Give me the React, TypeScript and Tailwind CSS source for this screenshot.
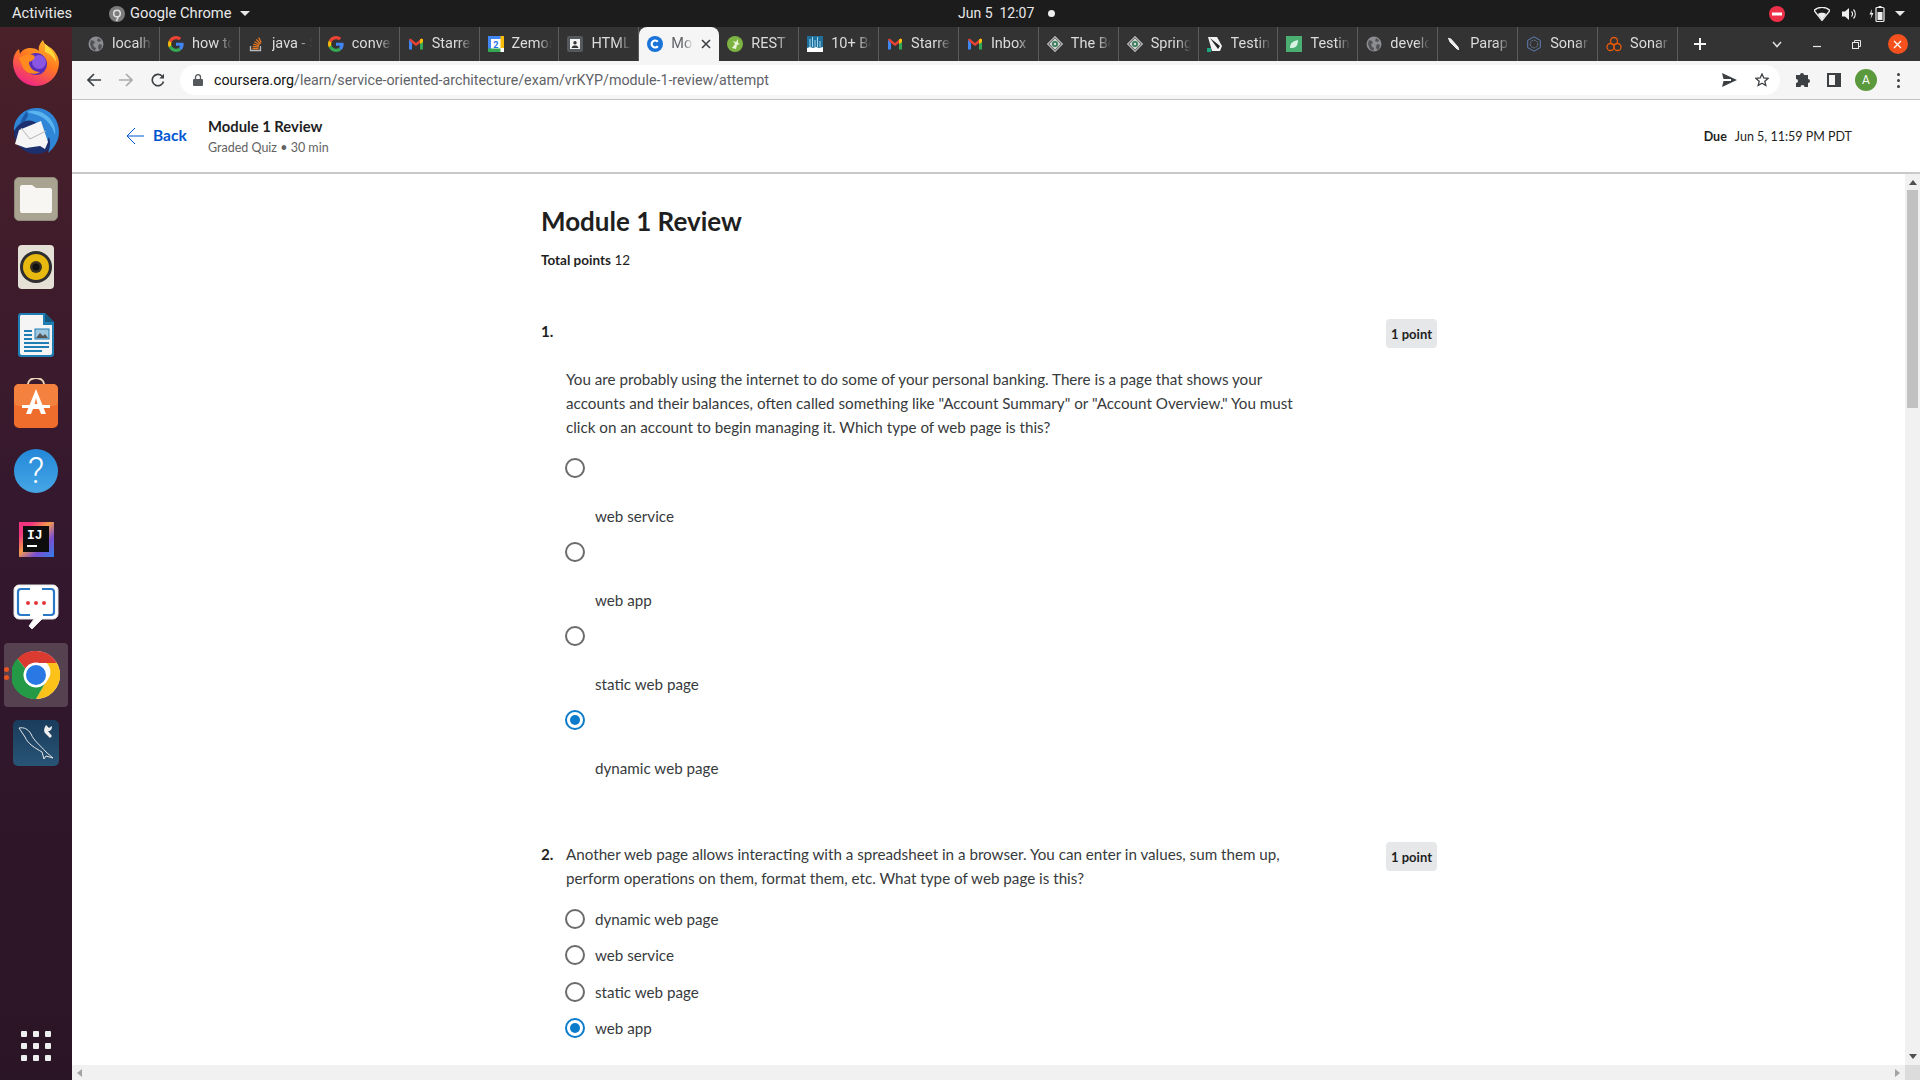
import React from 'react';

const UI = "font-['Roboto',sans-serif]";

type FavKind =
  | 'globe' | 'google' | 'so' | 'gmail' | 'cal' | 'html' | 'coursera' | 'rest'
  | 'bars' | 'gear' | 'pen' | 'leaf' | 'quill' | 'sonarhex' | 'sonarcloud';

const tabs: { label: string; icon: FavKind; active?: boolean }[] = [
  { label: 'localhost', icon: 'globe' },
  { label: 'how to', icon: 'google' },
  { label: 'java - St', icon: 'so' },
  { label: 'convert', icon: 'google' },
  { label: 'Starred', icon: 'gmail' },
  { label: 'Zemoso', icon: 'cal' },
  { label: 'HTML', icon: 'html' },
  { label: 'Mo', icon: 'coursera', active: true },
  { label: 'REST I', icon: 'rest' },
  { label: '10+ Be', icon: 'bars' },
  { label: 'Starred', icon: 'gmail' },
  { label: 'Inbox', icon: 'gmail' },
  { label: 'The Be', icon: 'gear' },
  { label: 'Spring', icon: 'gear' },
  { label: 'Testing', icon: 'pen' },
  { label: 'Testing', icon: 'leaf' },
  { label: 'develop', icon: 'globe' },
  { label: 'Parap', icon: 'quill' },
  { label: 'Sonar', icon: 'sonarhex' },
  { label: 'Sonar', icon: 'sonarcloud' },
];

const Favicon = ({ kind }: { kind: FavKind }) => {
  switch (kind) {
    case 'globe':
      return (
        <svg width="16" height="16" viewBox="0 0 16 16">
          <circle cx="8" cy="8" r="7.5" fill="#8b8d90" />
          <path d="M3 4l3 1 1 2-2 1 1 3 2 1-1 3-3-2-2-5zM10 2l3 2-1 2-3-1zM11 8l3 1-1 4-2 1-1-3z" fill="#4f5155" />
        </svg>
      );
    case 'google':
      return (
        <svg width="16" height="16" viewBox="0 0 48 48">
          <path fill="#EA4335" d="M24 9.5c3.5 0 6.700 1.300 9.100 3.500l6.800-6.800C35.800 2.400 30.300 0 24 0 14.600 0 6.500 5.400 2.600 13.200l7.900 6.100C12.400 13.700 17.700 9.500 24 9.500z" />
          <path fill="#4285F4" d="M46.900 24.500c0-1.600-.1-3.100-.4-4.500H24v9h12.900c-.6 3-2.200 5.500-4.700 7.200l7.600 5.900c4.500-4.100 7.100-10.200 7.100-17.600z" />
          <path fill="#FBBC05" d="M10.500 28.700c-.5-1.500-.8-3-.8-4.700s.3-3.200.8-4.700l-7.900-6.100C.9 16.500 0 20.100 0 24s.9 7.500 2.600 10.800z" />
          <path fill="#34A853" d="M24 48c6.500 0 11.900-2.100 15.800-5.900l-7.600-5.900c-2.100 1.400-4.900 2.300-8.200 2.300-6.300 0-11.600-4.200-13.500-9.900l-7.900 6.100C6.500 42.600 14.600 48 24 48z" />
        </svg>
      );
    case 'so':
      return (
        <svg width="16" height="16" viewBox="0 0 16 16" fill="none" stroke="#e87922" strokeWidth="1.300">
          <path d="M2.500 10v4.500h10V10" stroke="#bcbbbb" />
          <path d="M4.500 12.700h6M4.700 10.500l6 .6M5.300 8.200l5.800 1.600M6.500 5.800l5.200 3M8.300 3.500l4.300 4.300M10.700 1.500l2.500 5" />
        </svg>
      );
    case 'gmail':
      return (
        <svg width="16" height="16" viewBox="0 0 16 16">
          <path d="M1 3.500v10h3V7z" fill="#4285F4" />
          <path d="M12 7v6.500h3v-10z" fill="#34A853" />
          <path d="M1 3.500l1.500-1L8 7l5.500-4.500 1.500 1-3 3.500-4 3-4-3-3-3.500z" fill="#EA4335" />
          <path d="M12 3.500l1.500-1 1.500 1V6l-3 2z" fill="#FBBC05" />
        </svg>
      );
    case 'cal':
      return (
        <svg width="16" height="16" viewBox="0 0 16 16">
          <rect width="16" height="16" fill="#fff" />
          <rect width="16" height="3" fill="#4285F4" />
          <rect width="3" height="16" fill="#4285F4" />
          <rect x="12.500" width="3.500" height="12" fill="#FBBC05" />
          <rect y="12.500" width="12.500" height="3.500" fill="#34A853" />
          <text x="7.800" y="11.500" fontSize="9" fontWeight="700" fill="#1a73e8" textAnchor="middle" fontFamily="Roboto">2</text>
        </svg>
      );
    case 'html':
      return (
        <svg width="16" height="16" viewBox="0 0 16 16">
          <rect width="16" height="16" rx="2" fill="#55585c" />
          <rect x="3" y="3" width="10" height="10" fill="#f4f4f4" />
          <circle cx="8" cy="6.800" r="1.700" fill="#333" />
          <path d="M4.500 12c.5-2 2-2.500 3.500-2.500s3 .5 3.500 2.500z" fill="#333" />
        </svg>
      );
    case 'coursera':
      return (
        <svg width="16" height="16" viewBox="0 0 16 16">
          <circle cx="8" cy="8" r="8" fill="#1a73d9" />
          <path d="M10.800 5.700A3.500 3.500 0 1 0 10.800 10.300" stroke="#fff" strokeWidth="2.200" fill="none" />
        </svg>
      );
    case 'rest':
      return (
        <svg width="16" height="16" viewBox="0 0 16 16">
          <circle cx="8" cy="8" r="8" fill="#7cb342" />
          <path d="M5 12l3-4-2-3 3 1 2-3v4l2 1-3 1-1 4z" fill="#e8f5d8" />
        </svg>
      );
    case 'bars':
      return (
        <svg width="16" height="16" viewBox="0 0 16 16">
          <rect width="16" height="16" fill="#1f6f9c" />
          <path d="M0 16V12l3-1 3 1 3-1 3 1 4-1v5z" fill="#fff" />
          <path d="M3 11V3M5.500 11V1M8 11V4M10.500 11V1M13 11V5" stroke="#9fd8ef" strokeWidth="1" />
        </svg>
      );
    case 'gear':
      return (
        <svg width="16" height="16" viewBox="0 0 16 16">
          <path d="M8 0l8 8-8 8-8-8z" fill="#f1f1f1" />
          <path d="M8 1.800L14.200 8 8 14.200 1.800 8z" fill="none" stroke="#6a6a6a" strokeWidth="1.200" />
          <circle cx="8" cy="8" r="3.600" fill="#3f7a5c" stroke="#d8e6dd" strokeWidth=".7" />
          <circle cx="8" cy="8" r="1.200" fill="#cfe3d6" />
        </svg>
      );
    case 'pen':
      return (
        <svg width="16" height="16" viewBox="0 0 16 16">
          <path d="M1 1h9l5 9-2 5H5z" fill="#f2f2f2" />
          <path d="M3 2l10 8-2 3z" fill="#222" />
          <rect y="12" width="4" height="4" fill="#1ba784" />
        </svg>
      );
    case 'leaf':
      return (
        <svg width="16" height="16" viewBox="0 0 16 16">
          <rect width="16" height="16" fill="#4caf72" />
          <path d="M4 12c0-5 3-7 8-8 0 5-2 8-6 8-.7 0-1.500 0-2 0z" fill="#d9f2e1" />
        </svg>
      );
    case 'quill':
      return (
        <svg width="16" height="16" viewBox="0 0 16 16">
          <path d="M1 1l4 1 8 9 1 4-3-1-8-8z" fill="#ededed" stroke="#1b1b1b" strokeWidth=".8" />
        </svg>
      );
    case 'sonarhex':
      return (
        <svg width="16" height="16" viewBox="0 0 16 16" fill="none" stroke="#5d7fb5" strokeWidth="1">
          <path d="M8 .8l6.300 3.600v7.200L8 15.200l-6.300-3.600V4.400z" />
          <circle cx="8" cy="8" r="3.800" stroke="#7b8fae" strokeDasharray="1.500 1" />
        </svg>
      );
    default:
      return (
        <svg width="16" height="16" viewBox="0 0 16 16" fill="none" stroke="#e8590c" strokeWidth="1.300">
          <circle cx="8" cy="5" r="3.500" />
          <circle cx="4.500" cy="11" r="3.500" />
          <circle cx="11.500" cy="11" r="3.500" />
        </svg>
      );
  }
};

const TopBar = () => (
  <div className={`h-[27px] bg-[#1c1c1c] flex items-center text-[#e8e8e8] text-[14.7px] ${UI}`}>
    <span className="ml-[12px] w-[62px]">Activities</span>
    <svg className="ml-[35px]" width="16" height="16" viewBox="0 0 16 16">
      <circle cx="8" cy="8" r="8" fill="#7c7c7c" />
      <circle cx="8" cy="7.500" r="3.300" fill="none" stroke="#e0e0e0" strokeWidth="1.500" />
      <path d="M9.500 10l-2 5" stroke="#e0e0e0" strokeWidth="1.500" />
    </svg>
    <span className="ml-[5px] w-[105px] whitespace-nowrap">Google Chrome</span>
    <span className="ml-[5px] w-0 h-0 border-x-[5px] border-x-transparent border-t-[5px] border-t-[#e8e8e8]" />
    <span className="ml-[708px] w-[77px] whitespace-pre text-[14px]">Jun 5  12:07</span>
    <span className="ml-[13px] size-[7px] rounded-full bg-[#eeeeee]" />
    <svg className="ml-[714px]" width="16" height="16" viewBox="0 0 16 16">
      <circle cx="8" cy="8" r="8" fill="#ed2f47" />
      <rect x="3" y="6.500" width="10" height="3" fill="#fff" />
    </svg>
    <svg className="ml-[29px]" width="16" height="14" viewBox="0 0 16 14">
      <path d="M0 3.500C4.500-.8 11.500-.8 16 3.500L8 13.500z" fill="none" stroke="#eee" strokeWidth="1.300" />
      <path d="M3.800 7c2.300-1.800 6-1.800 8.400 0L8 13z" fill="#eee" />
    </svg>
    <svg className="ml-[12px]" width="15" height="14" viewBox="0 0 15 14">
      <path d="M0 4.500h3L7 1v12L3 9.500H0z" fill="#eee" />
      <path d="M9.500 4.500a3.500 3.500 0 0 1 0 5M11.500 2.500a6.500 6.500 0 0 1 0 9" stroke="#eee" fill="none" strokeWidth="1.100" />
    </svg>
    <svg className="ml-[12px]" width="16" height="18" viewBox="0 0 16 18">
      <path d="M3 4L.5 9.500h2L1.500 14 4.500 8h-2z" fill="#eee" />
      <rect x="7" y="2.500" width="8" height="14" rx="1" fill="none" stroke="#eee" strokeWidth="1.200" />
      <rect x="9.500" y="1" width="3" height="2" fill="#eee" />
      <rect x="8.500" y="7" width="5" height="8" fill="#eee" />
    </svg>
    <span className="ml-[10px] w-0 h-0 border-x-[5px] border-x-transparent border-t-[5px] border-t-[#e8e8e8]" />
  </div>
);

const Tab = ({ label, icon, active, first }: { label: string; icon: FavKind; active?: boolean; first?: boolean }) => (
  <div
    className={`relative shrink-0 flex items-center h-[34px] text-[14.5px] pl-[8px] ${first ? 'w-[80px]' : 'w-[79.9px]'} ${
      active ? 'bg-[#f5f5f5] text-[#5f6368] rounded-t-[8px]' : 'text-[#dcdcdc] border-r border-[#5a5b5e]'
    }`}
  >
    <div className="shrink-0 w-[16px] h-[16px]">
      <Favicon kind={icon} />
    </div>
    <span
      className={`ml-[8px] overflow-hidden whitespace-nowrap ${
        active ? 'w-[22px] [mask-image:linear-gradient(to_right,black_60%,transparent)]' : 'w-[40px] [mask-image:linear-gradient(to_right,black_65%,transparent)]'
      }`}
    >
      {label}
    </span>
    {active && (
      <svg className="ml-[8px]" width="10" height="10" viewBox="0 0 10 10">
        <path d="M1 1l8 8M9 1l-8 8" stroke="#3c4043" strokeWidth="1.600" />
      </svg>
    )}
  </div>
);

const TabStrip = () => (
  <div className={`h-[34px] bg-[#333333] flex items-end ${UI}`}>
    <div className="flex pl-[8px]">
      {tabs.map((tab, i) => (
        <Tab key={i} {...tab} first={i === 0} />
      ))}
    </div>
    <div className="flex items-center h-[34px]">
      <svg className="ml-[15px]" width="14" height="14" viewBox="0 0 14 14">
        <path d="M7 1v12M1 7h12" stroke="#f2f2f2" strokeWidth="2" />
      </svg>
      <svg className="ml-[65px]" width="10" height="7" viewBox="0 0 10 7">
        <path d="M1 1l4 4.500L9 1" stroke="#e0e0e0" strokeWidth="1.500" fill="none" />
      </svg>
      <svg className="ml-[31px]" width="8" height="8" viewBox="0 0 8 8">
        <path d="M0 6.500h8" stroke="#e8e8e8" strokeWidth="1.200" />
      </svg>
      <svg className="ml-[31px]" width="9" height="9" viewBox="0 0 9 9" fill="none" stroke="#e8e8e8" strokeWidth="1">
        <rect x=".5" y="2.500" width="6" height="6" />
        <path d="M2.500 2.500v-2h6v6h-2" />
      </svg>
      <div className="ml-[27px] size-[20px] rounded-full bg-[#f4511e] flex items-center justify-center">
        <svg width="9" height="9" viewBox="0 0 9 9">
          <path d="M1 1l7 7M8 1l-7 7" stroke="#fff" strokeWidth="1.300" />
        </svg>
      </div>
    </div>
  </div>
);

const Toolbar = () => (
  <div className={`h-[39px] bg-[#f5f5f5] border-b-[1px] border-[#c4c4c4] flex items-center ${UI}`}>
    <svg className="ml-[15px]" width="14" height="14" viewBox="0 0 14 14" fill="none" stroke="#3c4043" strokeWidth="1.700">
      <path d="M14 7H1.500M7 1L1 7l6 6" />
    </svg>
    <svg className="ml-[18px]" width="14" height="14" viewBox="0 0 14 14" fill="none" stroke="#a9abae" strokeWidth="1.700">
      <path d="M0 7h12.500M7 1l6 6-6 6" />
    </svg>
    <svg className="ml-[18px]" width="14" height="14" viewBox="0 0 14 14" fill="none" stroke="#3c4043" strokeWidth="1.600">
      <path d="M12.500 8.500A5.700 5.700 0 1 1 11 3" />
      <path d="M13 0.800v4.700H8.300z" fill="#3c4043" stroke="none" />
    </svg>
    <div className="ml-[15px] w-[1600px] h-[30px] rounded-full bg-white flex items-center">
      <svg className="ml-[13px]" width="10" height="12" viewBox="0 0 10 12">
        <rect y="5" width="10" height="7" rx="1" fill="#55585c" />
        <path d="M2.500 5V3.200a2.500 2.500 0 0 1 5 0V5" fill="none" stroke="#55585c" strokeWidth="1.300" />
      </svg>
      <span className="ml-[11px] pt-[1px] text-[14.25px] text-[#5f6368] whitespace-nowrap">
        <span className="text-[#111]">coursera.org</span>/learn/service-oriented-architecture/exam/vrKYP/module-1-review/attempt
      </span>
      <svg className="ml-auto" width="15" height="14" viewBox="0 0 15 14">
        <path d="M0 0l15 7-15 7 1.500-6H9V6H1.500z" fill="#3c4043" />
      </svg>
      <svg className="ml-[18px] mr-[11px]" width="14" height="14" viewBox="0 0 14 14">
        <path d="M7 1l1.800 4 4.200.4-3.200 2.800 1 4.300L7 10.200l-3.800 2.300 1-4.300L1 5.400 5.200 5z" fill="none" stroke="#3c4043" strokeWidth="1.300" />
      </svg>
    </div>
    <svg className="ml-[15px]" width="15" height="15" viewBox="0 0 15 15">
      <path d="M5 2a2 2 0 0 1 4 0h4v4a2 2 0 0 1 0 4v4H9.500a2 2 0 0 0-4 0H1v-4a2 2 0 0 0 0-4V2z" fill="#3c4043" />
    </svg>
    <svg className="ml-[17px]" width="14" height="14" viewBox="0 0 14 14">
      <path d="M0 0h14v14H0zM2 2v10h6V2z" fill="#3c4043" fillRule="evenodd" />
    </svg>
    <div className="ml-[14px] size-[22px] rounded-full bg-[#5b9a3c] text-white text-[12px] flex items-center justify-center">A</div>
    <div className="ml-[20px] flex flex-col gap-[3px]">
      <span className="size-[3px] rounded-full bg-[#3c4043]" />
      <span className="size-[3px] rounded-full bg-[#3c4043]" />
      <span className="size-[3px] rounded-full bg-[#3c4043]" />
    </div>
  </div>
);

const Firefox = () => (
  <svg width="46" height="46" viewBox="0 0 46 46">
    <defs>
      <linearGradient id="ffBody" x1="0.800" y1="0" x2="0.300" y2="1">
        <stop offset="0" stopColor="#ffbd2e" />
        <stop offset=".45" stopColor="#ff7a1f" />
        <stop offset="1" stopColor="#f0218a" />
      </linearGradient>
    </defs>
    <path d="M30 0c1 4 4 6 8 8 5 4 8 10 8 15a23 23 0 1 1-46 0c0-6 2-11 6-14l1 5c2-4 6-6 10-6 4 0 7 1 9 3-1-4 1-8 4-11z" fill="url(#ffBody)" />
    <circle cx="23" cy="24" r="11" fill="#5a2db8" />
    <circle cx="26" cy="22" r="7" fill="#8a55e0" />
    <path d="M6 18c5-3 10-5 14-3 4 2 0 6-4 7 0 6 5 10 11 10-6 4-16 1-18-7-1-2-2-4-3-7z" fill="#ff8a1f" />
    <path d="M32 4c5 3 11 10 11 18-3-6-7-9-11-10z" fill="#ffd83b" />
  </svg>
);

const Thunderbird = () => (
  <svg width="48" height="48" viewBox="0 0 48 48">
    <circle cx="24" cy="25" r="22" fill="#1c2f6e" />
    <path d="M2 24C1 12 12 0 26 1c12 1 21 11 21 24 0 9-5 16-11 21 2-5 3-10 1-16l-4 9c1-9-1-17-7-22C19 11 9 12 2 24z" fill="#2f86d6" />
    <path d="M15 5c8-3 18 0 24 8 3 4 5 9 4 15-3-10-9-17-18-20-3-1-7-2-10-3z" fill="#5cb4ee" />
    <path d="M7 23l22-9 7 21-3 7-5-3-14 2L3 37z" fill="#f5f5f5" />
    <path d="M9 21l9 11 16-8" fill="none" stroke="#b5b5b5" strokeWidth="1" />
    <path d="M15 4c-3 4-6 8-7 13l5-3 3-5z" fill="#1f5aa8" />
  </svg>
);

const Files = () => (
  <div className="w-[44px] h-[44px] rounded-[5px] bg-[#a9a392] border border-[#8f8a7c] flex items-center justify-center">
    <svg width="32" height="28" viewBox="0 0 32 28">
      <path d="M2 0h10l4 3h14a2 2 0 0 1 2 2v21a2 2 0 0 1-2 2H2a2 2 0 0 1-2-2V2a2 2 0 0 1 2-2z" fill="#f8f6f2" />
    </svg>
  </div>
);

const Rhythmbox = () => (
  <div className="w-[36px] h-[44px] rounded-[4px] bg-[#e4e0d6] flex items-center justify-center">
    <svg width="32" height="32" viewBox="0 0 32 32">
      <circle cx="16" cy="16" r="16" fill="#2f2f2f" />
      <circle cx="16" cy="16" r="13" fill="#e8b90f" />
      <circle cx="16" cy="16" r="6" fill="#3a3220" />
      <circle cx="16" cy="16" r="3.500" fill="#111" />
    </svg>
  </div>
);

const Writer = () => (
  <svg width="36" height="44" viewBox="0 0 36 44">
    <path d="M3 0h24l9 9v32a3 3 0 0 1-3 3H3a3 3 0 0 1-3-3V3a3 3 0 0 1 3-3z" fill="#1f7fb5" />
    <path d="M3 2h22v10h9v28a2 2 0 0 1-2 2H4a2 2 0 0 1-2-2V3z" fill="#f5f5f5" />
    <path d="M27 0l9 9h-9z" fill="#14587f" />
    <path d="M6 17h8v2H6zM6 21h8v2H6zM6 25h8v2H6zM6 29h25v2H6zM6 33h25v2H6zM6 37h18v2H6z" fill="#1f7fb5" />
    <rect x="17" y="16" width="14" height="10" fill="#9fc7df" stroke="#1f7fb5" />
    <path d="M18 25l4-5 3 3 2-2 3 4z" fill="#555" />
  </svg>
);

const Software = () => (
  <svg width="44" height="50" viewBox="0 0 44 50">
    <path d="M14 10V6a8 6 0 0 1 16 0v4" fill="none" stroke="#e8d5b8" strokeWidth="2" />
    <rect y="6" width="44" height="44" rx="5" fill="#ee6d2c" />
    <rect y="6" width="44" height="22" rx="5" fill="#f5813e" />
    <path d="M22 11L12 36h5l2-5h6l2 5h5zM20.500 26l1.500-6 1.500 6z" fill="#fff" fillRule="evenodd" />
    <rect x="8" y="27" width="28" height="3" fill="#fff" />
  </svg>
);

const Help = () => (
  <div className={`size-[44px] rounded-full bg-[linear-gradient(#2388d8,#46a6e6)] text-white text-[36px] font-light leading-none flex items-center justify-center ${UI}`}>?</div>
);

const IntelliJ = () => (
  <div className="size-[35px] bg-[linear-gradient(135deg,#f0357e_20%,#f59a4a_45%,#7c4fd0_70%,#2f7fe8)] flex items-center justify-center">
    <div className="size-[26px] bg-[#0d0d0d] text-white text-[13px] font-bold leading-none pt-[3px] pl-[4px] font-['Liberation_Mono',monospace]">
      IJ
      <div className="mt-[3px] w-[10px] h-[2px] bg-white" />
    </div>
  </div>
);

const Messages = () => (
  <svg width="46" height="46" viewBox="0 0 46 46">
    <path d="M6 1h34a5 5 0 0 1 5 5v24a5 5 0 0 1-5 5H29L19 45l-3-3 5-7H6a5 5 0 0 1-5-5V6a5 5 0 0 1 5-5z" fill="#fff" stroke="#e8e8e8" />
    <path d="M17 5H8a3 3 0 0 0-3 3v20a3 3 0 0 0 3 3h9M29 5h9a3 3 0 0 1 3 3v20a3 3 0 0 1-3 3h-8" fill="none" stroke="#2a78c8" strokeWidth="2.200" />
    <circle cx="15" cy="19" r="2" fill="#e03a3a" />
    <circle cx="23" cy="19" r="2" fill="#e03a3a" />
    <circle cx="31" cy="19" r="2" fill="#e03a3a" />
  </svg>
);

const Chrome = () => (
  <svg width="48" height="48" viewBox="0 0 48 48">
    <circle cx="24" cy="24" r="24" fill="#fff" />
    <path d="M24 0a24 24 0 0 1 20.800 12H24a12 12 0 0 0-10.400 6L5.400 7.700A24 24 0 0 1 24 0z" fill="#db3a30" />
    <path d="M44.800 12A24 24 0 0 1 24 48l10.400-18a12 12 0 0 0 0-18z" fill="#fcc21a" />
    <path d="M5.400 7.700A24 24 0 0 0 24 48l10.400-18a12 12 0 0 1-20.800 0z" fill="#249a46" />
    <path d="M5.400 7.700l8.200 10.300a12 12 0 0 0 0 12L24 48A24 24 0 0 1 5.400 7.700z" fill="#249a46" />
    <circle cx="24" cy="24" r="12.500" fill="#fff" />
    <circle cx="24" cy="24" r="10" fill="#2a78e4" />
  </svg>
);

const Workbench = () => (
  <svg width="46" height="46" viewBox="0 0 46 46">
    <defs>
      <linearGradient id="wbBg" x1="0" y1="0" x2="0" y2="1">
        <stop offset="0" stopColor="#1a3c5c" />
        <stop offset="1" stopColor="#285475" />
      </linearGradient>
    </defs>
    <rect width="46" height="46" rx="5" fill="url(#wbBg)" />
    <path d="M6 8c5-1 9 1 12 6 3 7 9 11 15 18l7 6-7-2-2 3-2-7C22 28 15 24 12 17 10 14 8 11 6 8z" fill="none" stroke="#e8e8e8" strokeWidth="1" />
    <path d="M33 5l3 3 3-2c0 3-1 5-4 5l4 5-2 2-5-5c-2-3 0-6 1-8z" fill="#efefef" />
  </svg>
);

const dockApps = [Firefox, Thunderbird, Files, Rhythmbox, Writer, Software, Help, IntelliJ, Messages, Chrome, Workbench];

const Dock = () => (
  <div className="w-[72px] shrink-0 flex flex-col items-center bg-[linear-gradient(#4a2029,#35182e_45%,#2a1526)] pt-[2px]">
    {dockApps.map((App, i) => (
      <div
        key={i}
        className={`relative w-[64px] h-[64px] my-[2px] shrink-0 flex items-center justify-center rounded-[4px] ${i === 9 ? 'bg-[#55414f]' : ''}`}
      >
        {i === 9 && (
          <div className="absolute left-[0px] top-[24px] flex flex-col gap-[3px]">
            <span className="size-[5px] rounded-full bg-[#e95420]" />
            <span className="size-[5px] rounded-full bg-[#e95420]" />
          </div>
        )}
        <App />
      </div>
    ))}
    <div className="mt-auto mb-[19px] grid grid-cols-3 gap-[6px]">
      {Array.from({ length: 9 }).map((_, i) => (
        <span key={i} className="size-[6px] rounded-[1px] bg-[#efefef]" />
      ))}
    </div>
  </div>
);

const PageHeader = () => (
  <div className="h-[74px] shrink-0 bg-white border-b-[2px] border-[#c9c9c9] flex items-center font-['Lato',sans-serif]">
    <svg className="ml-[54px]" width="18" height="18" viewBox="0 0 18 18" fill="none" stroke="#0056d2" strokeWidth="1">
      <path d="M18 9H1M9 1L1 9l8 8" />
    </svg>
    <span className="ml-[9px] w-[34px] text-[15.5px] font-bold text-[#0056d2]">Back</span>
    <div className="ml-[21px] pt-[2px] flex flex-col">
      <span className="text-[14.8px] leading-[22px] font-bold text-[#1f1f1f]">Module 1 Review</span>
      <span className="text-[12.5px] leading-[22px] text-[#636363]">Graded Quiz • 30 min</span>
    </div>
    <div className="ml-auto mr-[68px] pt-[2px] text-[12.5px] text-[#1f1f1f]">
      <span className="font-bold">Due</span>
      <span className="ml-[8px]">Jun 5, 11:59 PM PDT</span>
    </div>
  </div>
);

const Radio = ({ checked }: { checked?: boolean }) =>
  checked ? (
    <span className="size-[20px] shrink-0 rounded-full border-[2px] border-[#0b7bcb] flex items-center justify-center">
      <span className="size-[10px] rounded-full bg-[#0b7bcb]" />
    </span>
  ) : (
    <span className="block size-[20px] shrink-0 rounded-full border-[2px] border-[#6b6b6b]" />
  );

const PointBadge = () => (
  <span className="shrink-0 w-[51px] h-[29px] rounded-[4px] bg-[#e5e7e8] text-[13px] font-bold text-[#1f1f1f] flex items-center justify-center">
    1 point
  </span>
);

const q1Options = [
  { label: 'web service' },
  { label: 'web app' },
  { label: 'static web page' },
  { label: 'dynamic web page', checked: true },
];

const q2Options = [
  { label: 'dynamic web page' },
  { label: 'web service' },
  { label: 'static web page' },
  { label: 'web app', checked: true },
];

const QuizBody = () => (
  <div className="flex-1 overflow-hidden bg-white pl-[469px] pt-[29px] text-[#373a3c] font-['Lato',sans-serif] text-[15.2px] leading-[24px]">
    <div className="w-[896px]">
      <h1 className="text-[26px] leading-[36px] font-bold text-[#1f1f1f]">Module 1 Review</h1>
      <p className="mt-[11px] text-[13.5px] leading-[20px] text-[#1f1f1f]">
        <span className="font-bold">Total points</span> 12
      </p>

      <div className="mt-[49px] h-[48px] flex justify-between">
        <span className="font-bold text-[#1f1f1f]">1.</span>
        <PointBadge />
      </div>
      <p className="ml-[25px]">
        You are probably using the internet to do some of your personal banking. There is a page that shows your
        <br />
        accounts and their balances, often called something like "Account Summary" or "Account Overview." You must
        <br />
        click on an account to begin managing it. Which type of web page is this?
      </p>
      <div className="ml-[24px] mt-[19px] flex flex-col">
        {q1Options.map((o) => (
          <div key={o.label} className="h-[84px] shrink-0">
            <Radio checked={o.checked} />
            <div className="ml-[30px] mt-[26px]">{o.label}</div>
          </div>
        ))}
      </div>

      <div className="mt-[48px]">
        <div className="flex justify-between">
          <div className="flex">
            <span className="w-[25px] font-bold text-[#1f1f1f]">2.</span>
            <p>
              Another web page allows interacting with a spreadsheet in a browser. You can enter in values, sum them up,
              <br />
              perform operations on them, format them, etc. What type of web page is this?
            </p>
          </div>
          <PointBadge />
        </div>
        <div className="ml-[24px] mt-[11px] flex flex-col">
          {q2Options.map((o) => (
            <div key={o.label} className="h-[36.33px] shrink-0 flex items-center">
              <Radio checked={o.checked} />
              <span className="ml-[10px]">{o.label}</span>
            </div>
          ))}
        </div>
      </div>
    </div>
  </div>
);

const VScrollbar = () => (
  <div className="w-[15px] shrink-0 bg-[#f1f1f1] flex flex-col items-center">
    <span className="mt-[6px] w-0 h-0 border-x-[4px] border-x-transparent border-b-[5px] border-b-[#505050]" />
    <div className="mt-[5px] w-[11px] h-[218px] bg-[#c1c1c1]" />
    <span className="mt-auto mb-[6px] w-0 h-0 border-x-[4px] border-x-transparent border-t-[5px] border-t-[#505050]" />
  </div>
);

const HScrollbar = () => (
  <div className="h-[15px] shrink-0 bg-[#f1f1f1] flex items-center">
    <span className="ml-[5px] w-0 h-0 border-y-[4px] border-y-transparent border-r-[5px] border-r-[#a3a3a3]" />
    <span className="ml-auto mr-[5px] w-0 h-0 border-y-[4px] border-y-transparent border-l-[5px] border-l-[#a3a3a3]" />
    <div className="w-[15px] h-[15px] bg-[#dcdcdc]" />
  </div>
);

const App: React.FC = () => (
  <div className="w-[1920px] h-[1080px] flex flex-col overflow-hidden bg-white">
    <TopBar />
    <div className="flex flex-1 min-h-0">
      <Dock />
      <div className="flex-1 min-w-0 flex flex-col">
        <TabStrip />
        <Toolbar />
        <PageHeader />
        <div className="flex-1 min-h-0 flex">
          <QuizBody />
          <VScrollbar />
        </div>
        <HScrollbar />
      </div>
    </div>
  </div>
);

export default App;
